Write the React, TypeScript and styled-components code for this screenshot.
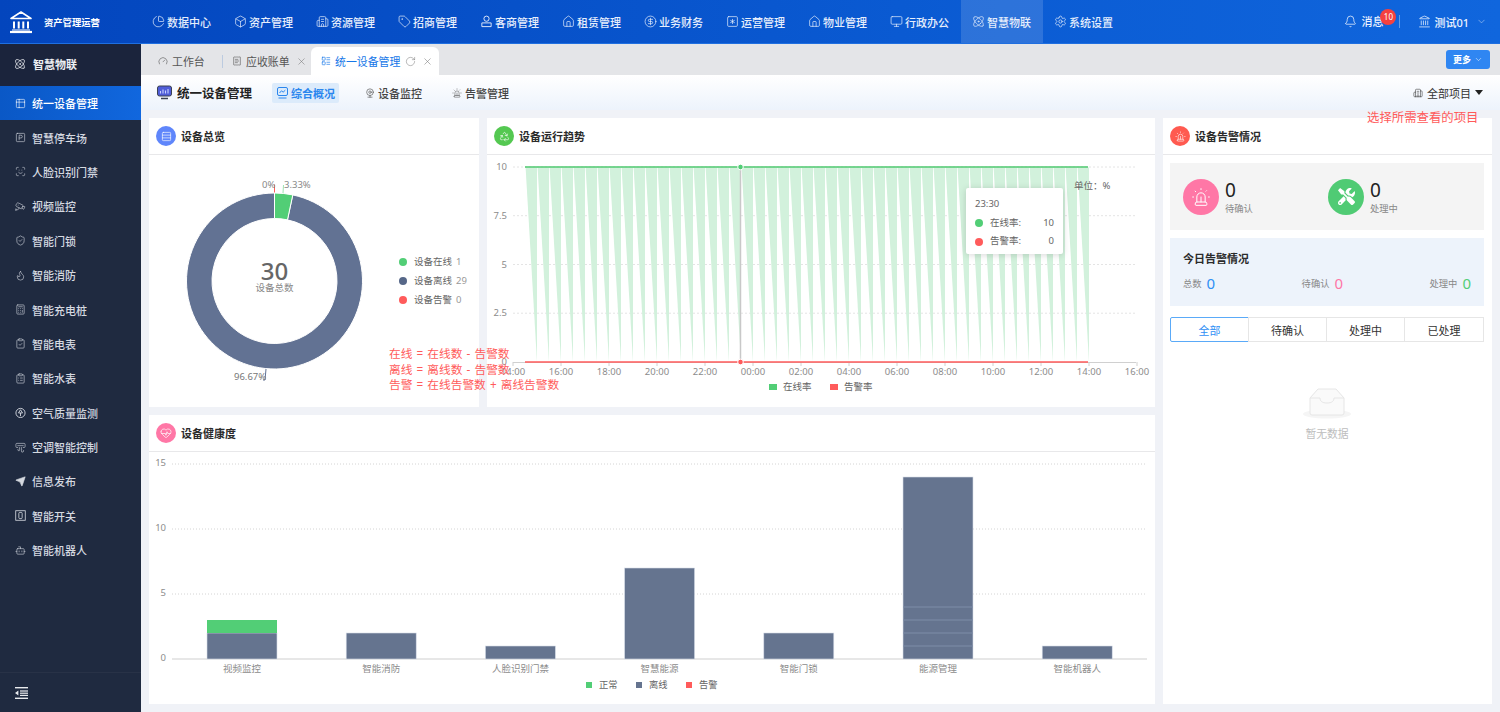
import React from 'react';
import styled, { createGlobalStyle } from 'styled-components';
import {
  AirVent, Atom, Bell, Bot, Box, Building2, Calculator, Cctv, ChartPie, ChevronDown,
  CircleDollarSign, ClipboardCheck, ClipboardList, Flame, Gauge, HeartPulse,
  House, Landmark, LayoutList, ReceiptText, Recycle, Monitor,
  RotateCw, Rows3, ScanFace, Send, Settings, ShieldCheck, Siren, SquareAsterisk, SquareParking, Table2, Tag,
  Webcam, X,
} from 'lucide-react';
import { FaTools } from 'react-icons/fa';

const GREEN = '#52ce76';
const NAVY = '#65748f';
const RED = '#ff5b5b';
const AXIS = '#8c8c8c';

const GlobalStyle = createGlobalStyle`
  html, body, #root {
    margin: 0;
    height: 100%;
  }
  body {
    font-family: "Noto Sans", "Noto Sans CJK SC", sans-serif;
    background: #f0f2f7;
    overflow: hidden;
  }
  svg text {
    font-family: "Noto Sans", "Noto Sans CJK SC", sans-serif;
  }
`;

const Page = styled.div`
  width: 1500px;
  height: 712px;
  display: grid;
  grid-template-rows: 44px 1fr;
  grid-template-columns: 141px 1fr;
  overflow: hidden;
  position: relative;
`;

/* ---------- top bar ---------- */
const TopBar = styled.header`
  grid-column: 1 / 3;
  display: flex;
  align-items: stretch;
  background: linear-gradient(90deg, #0345bd 0%, #0a5ad2 60%, #1066dd 100%);
  border-bottom: 1px solid #1f6fe0;
  color: #fff;
`;

const Brand = styled.div`
  width: 141px;
  display: flex;
  align-items: center;
  gap: 11px;
  padding-left: 9px;
  box-sizing: border-box;
  font-size: 9.3px;
  font-weight: 700;
`;

const Nav = styled.nav`
  display: flex;
  flex: 1;
`;

const NavItem = styled.div<{ $active?: boolean }>`
  width: 82px;
  display: flex;
  align-items: center;
  gap: 2px;
  padding-left: 11px;
  box-sizing: border-box;
  font-size: 11px;
  font-weight: 500;
  color: #e6eefc;
  background: ${p => (p.$active ? 'rgba(255,255,255,.14)' : 'transparent')};
  white-space: nowrap;
`;

const UserArea = styled.div`
  display: flex;
  align-items: center;
  font-size: 11px;
  font-weight: 500;
  color: #eef4ff;
  padding-right: 13px;
`;

const MsgBox = styled.div`
  position: relative;
  display: flex;
  align-items: center;
  gap: 4px;
  padding-right: 16px;
  border-right: 1px solid rgba(255,255,255,.35);
  line-height: 12px;
`;

const Badge = styled.span`
  position: absolute;
  left: 36px;
  top: -6px;
  width: 16px;
  height: 16px;
  border-radius: 50%;
  background: #f5413f;
  font-size: 8px;
  font-weight: 400;
  line-height: 16px;
  text-align: center;
  color: #fff;
`;

const UserName = styled.div`
  display: flex;
  align-items: center;
  gap: 3px;
  margin-left: 18px;
`;

const UserChevron = styled(ChevronDown)`
  margin-left: 4px;
  opacity: .8;
`;

/* ---------- side bar ---------- */
const Side = styled.aside`
  background: #1f2a40;
  display: flex;
  flex-direction: column;
  color: #d5d9e0;
`;

const SideHead = styled.div`
  height: 42px;
  display: flex;
  align-items: center;
  gap: 7px;
  padding: 0 0 2px 14px;
  box-sizing: border-box;
  background: #1b243c;
  color: #eef0f4;
  font-size: 11px;
  font-weight: 700;
`;

const SideItem = styled.div<{ $active?: boolean }>`
  height: 34.4px;
  flex: none;
  display: flex;
  align-items: center;
  gap: 6px;
  padding-left: 15px;
  font-size: 11px;
  font-weight: 500;
  color: ${p => (p.$active ? '#fff' : '#d5d9e0')};
  background: ${p => (p.$active ? 'linear-gradient(90deg, #0a58c6, #1167de)' : 'transparent')};
`;

const SideFoot = styled.div`
  margin-top: auto;
  height: 39px;
  display: flex;
  align-items: center;
  padding-left: 15px;
  border-top: 1px solid #283247;
`;

/* ---------- tabs ---------- */
const Main = styled.main`
  display: flex;
  flex-direction: column;
  min-width: 0;
`;

const TabBar = styled.div`
  height: 31px;
  flex: none;
  display: flex;
  align-items: flex-end;
  background: #e4e5e8;
  position: relative;
  padding-left: 17px;
  font-size: 10.9px;
  color: #555;
`;

const Tab = styled.div<{ $active?: boolean; $width: number }>`
  width: ${p => p.$width}px;
  height: 28px;
  box-sizing: border-box;
  display: flex;
  align-items: center;
  gap: 4px;
  flex: none;
  padding-left: ${p => (p.$active ? 10 : 0)}px;
  background: ${p => (p.$active ? '#fff' : 'transparent')};
  border-radius: ${p => (p.$active ? '6px 6px 0 0' : '0')};
  color: ${p => (p.$active ? '#1677e8' : '#555')};
`;

const TabClose = styled(X)`
  margin-left: 2px;
  color: #777;
`;

const TabReload = styled(RotateCw)`
  margin-left: 1px;
  color: #777;
`;

const TabDivider = styled.span`
  width: 1px;
  height: 13px;
  margin: 0 9px 7px 0;
  background: #bccbe0;
  flex: none;
`;

const MoreButton = styled.button`
  position: absolute;
  right: 10px;
  top: 6px;
  width: 44px;
  height: 19px;
  display: flex;
  align-items: center;
  justify-content: center;
  gap: 3px;
  padding: 0;
  border: 0;
  border-radius: 3px;
  background: #2f86f2;
  color: #fff;
  font: 700 9px "Noto Sans", "Noto Sans CJK SC", sans-serif;
`;

const SubBar = styled.div`
  height: 35px;
  flex: none;
  display: flex;
  align-items: center;
  padding: 0 17px 0 16px;
  background: linear-gradient(180deg, #fff 0%, #edf3fc 100%);
  font-size: 11px;
  color: #444;
`;

const PageTitle = styled.div`
  display: flex;
  align-items: center;
  gap: 5px;
  width: 115px;
  font-size: 12.5px;
  font-weight: 700;
  color: #222;
  white-space: nowrap;
`;

const SubTab = styled.div<{ $active?: boolean; $width: number }>`
  width: ${p => p.$width}px;
  height: 20px;
  display: flex;
  align-items: center;
  gap: 3px;
  box-sizing: border-box;
  padding-left: 5px;
  border-radius: 2px;
  font-weight: ${p => (p.$active ? 700 : 500)};
  color: ${p => (p.$active ? '#2a86ee' : '#444')};
  background: ${p => (p.$active ? '#dcebfb' : 'transparent')};
`;

const SubTabs = styled.div`
  display: flex;
  gap: 21px;
`;

const ProjectPicker = styled.div`
  margin-left: auto;
  display: flex;
  align-items: center;
  gap: 4px;
  color: #333;
`;

const Caret = styled.span`
  width: 0;
  height: 0;
  border-left: 4px solid transparent;
  border-right: 4px solid transparent;
  border-top: 5px solid #222;
`;

/* ---------- content ---------- */
const Content = styled.div`
  flex: 1;
  display: grid;
  grid-template-columns: 1006px 329px;
  column-gap: 8px;
  padding: 8px;
  min-height: 0;
  position: relative;
`;

const LeftCol = styled.div`
  display: grid;
  grid-template-columns: 330px 668px;
  grid-template-rows: 289px 289px;
  gap: 8px;
`;

const Card = styled.section<{ $wide?: boolean }>`
  background: #fff;
  display: flex;
  flex-direction: column;
  grid-column: ${p => (p.$wide ? '1 / 3' : 'auto')};
  min-height: 0;
`;

const CardHead = styled.div`
  height: 37px;
  flex: none;
  display: flex;
  align-items: center;
  gap: 5px;
  padding-left: 7px;
  box-sizing: border-box;
  border-bottom: 1px solid #e8e8ea;
  font-size: 11px;
  font-weight: 700;
  color: #2b2b2b;
`;

const Round = styled.span<{ $color: string; $size?: number }>`
  width: ${p => p.$size ?? 20}px;
  height: ${p => p.$size ?? 20}px;
  border-radius: 50%;
  background: ${p => p.$color};
  display: flex;
  align-items: center;
  justify-content: center;
  color: #fff;
  flex: none;
`;

const ChartBody = styled.div`
  flex: 1;
  display: flex;
  position: relative;
  min-height: 0;
`;

const ChartSvg = styled.svg`
  display: block;
  flex: none;
`;

const DonutLegend = styled.ul`
  list-style: none;
  margin: 0;
  padding: 0;
  align-self: center;
  display: flex;
  flex-direction: column;
  gap: 5px;
  font-size: 9.5px;
  line-height: 14px;
  color: #666;
`;

const LegendRow = styled.li`
  display: flex;
  align-items: center;
  gap: 7px;
`;

const Dot = styled.i<{ $color: string }>`
  width: 8px;
  height: 8px;
  border-radius: 50%;
  background: ${p => p.$color};
  flex: none;
`;

const LegendCount = styled.span`
  color: #999;
  margin-left: -3px;
`;

const Tooltip = styled.div`
  position: absolute;
  left: 479px;
  top: 33px;
  width: 97px;
  height: 66px;
  box-sizing: border-box;
  padding: 7px 9px;
  background: #fff;
  border-radius: 2px;
  box-shadow: 0 1px 7px rgba(0,0,0,.16);
  font-size: 9.5px;
  line-height: 18.7px;
  color: #666;
`;

const TipRow = styled.div`
  display: flex;
  align-items: center;
  gap: 7px;
`;

const TipValue = styled.span`
  margin-left: auto;
`;

const UnitLabel = styled.span`
  position: absolute;
  left: 587px;
  top: 24px;
  font-size: 9.5px;
  line-height: 14px;
  color: #666;
`;

const Note = styled.div`
  position: absolute;
  color: #ff5b5b;
  font-size: 11.7px;
  line-height: 15.6px;
  white-space: pre;
  pointer-events: none;
`;

const FormulaNote = styled(Note)`
  left: 248px;
  top: 236px;
  word-spacing: 1.1px;
`;

const ProjectNote = styled(Note)`
  left: 1226px;
  top: 0;
  font-size: 12.4px;
`;

/* ---------- alarm panel ---------- */
const AlarmBody = styled.div`
  padding: 8px 8px 8px 7px;
  display: flex;
  flex-direction: column;
  gap: 8px;
`;

const StatPanel = styled.div`
  height: 67px;
  background: #f4f4f4;
  display: grid;
  grid-template-columns: 145px 1fr;
  align-items: center;
  padding-left: 13px;
`;

const Stat = styled.div`
  display: flex;
  align-items: center;
  gap: 6px;
`;

const StatNumber = styled.div`
  font-size: 19px;
  line-height: 22px;
  color: #222;
`;

const StatLabel = styled.div`
  font-size: 9.3px;
  line-height: 12px;
  margin-top: 2px;
  color: #888;
`;

const TodayPanel = styled.div`
  height: 68px;
  box-sizing: border-box;
  background: #edf3fb;
  padding: 13px 13px 0;
`;

const TodayTitle = styled.div`
  font-size: 11px;
  line-height: 16px;
  font-weight: 700;
  color: #2b2b2b;
`;

const TodayRow = styled.div`
  display: flex;
  justify-content: space-between;
  align-items: center;
  margin-top: 7px;
  font-size: 9.3px;
  color: #888;
`;

const TodayCell = styled.div`
  display: flex;
  align-items: center;
  gap: 5px;
`;

const TodayNumber = styled.span<{ $color: string }>`
  font-size: 15px;
  line-height: 18px;
  color: ${p => p.$color};
`;

const Segments = styled.div`
  margin-top: 3px;
  height: 25px;
  display: grid;
  grid-template-columns: 79px 78px 78px 79px;
  border-radius: 2px;
`;

const Segment = styled.div<{ $active?: boolean }>`
  display: flex;
  align-items: center;
  justify-content: center;
  font-size: 11px;
  color: ${p => (p.$active ? '#2f8ff5' : '#333')};
  border: 1px solid ${p => (p.$active ? '#5aaaf8' : '#e6e6e6')};
  margin-left: ${p => (p.$active ? 0 : -1)}px;
  border-radius: ${p => (p.$active ? '2px 0 0 2px' : 0)};
`;

const Empty = styled.div`
  margin-top: 38px;
  display: flex;
  flex-direction: column;
  align-items: center;
  gap: 8px;
  font-size: 10.8px;
  line-height: 14px;
  color: #bdbdbd;
`;

type IconProps = { size?: number; strokeWidth?: number };

const PersonBase = ({ size = 13 }: IconProps) => (
  <svg width={size} height={size} viewBox="0 0 14 14" fill="none" stroke="currentColor" strokeWidth="1">
    <circle cx="7" cy="4" r="2.8" />
    <path d="M2 8.5h10v4H2z" />
  </svg>
);

const LeafCircle = ({ size = 11 }: IconProps) => (
  <svg width={size} height={size} viewBox="0 0 12 12" fill="none" stroke="currentColor" strokeWidth="1">
    <circle cx="6" cy="6.5" r="5" />
    <path d="M6 3 3.8 6.5h4.4zM6 6.5V10" />
  </svg>
);

const SwitchIcon = ({ size = 11 }: IconProps) => (
  <svg width={size} height={size} viewBox="0 0 12 12" fill="none" stroke="currentColor" strokeWidth="0.9">
    <rect x="0.8" y="0.8" width="10.4" height="10.4" />
    <rect x="4.2" y="2.6" width="3.6" height="6.8" rx="1" />
  </svg>
);

const CollapseIcon = () => (
  <svg width="13" height="12" viewBox="0 0 13 12" fill="#e8eaee">
    <rect x="0" y="0" width="13" height="1.4" />
    <rect x="5" y="3.4" width="8" height="1.2" />
    <rect x="5" y="5.6" width="8" height="1.2" />
    <rect x="5" y="7.8" width="8" height="1.2" />
    <rect x="0" y="10.6" width="13" height="1.4" />
    <path d="M3.4 3.4v5.2L0 6z" />
  </svg>
);

const ScreenIcon = () => (
  <svg width="15" height="15" viewBox="0 0 15 15">
    <rect x="0.5" y="1" width="14" height="10" rx="2" fill="#4f5dd8" stroke="#3a4152" strokeWidth="1" />
    <path d="M3.5 8.5V6M6 8.5V4.5M8.5 8.5V5.5M11 8.5V4" stroke="#c9d2ff" strokeWidth="1.1" />
    <path d="M4 13.5h7" stroke="#3a4152" strokeWidth="1.5" />
  </svg>
);

const ChartScreenIcon = () => (
  <svg width="11" height="12" viewBox="0 0 11 12" fill="none" stroke="#2a86ee" strokeWidth="1">
    <rect x="0.5" y="0.5" width="10" height="8" rx="1.5" />
    <path d="M2.5 6 4.5 3.8l1.6 1.4 2.2-2" />
    <path d="M1.5 11h8" />
  </svg>
);

const navItems = [
  ['数据中心', ChartPie], ['资产管理', Box], ['资源管理', Building2], ['招商管理', Tag],
  ['客商管理', PersonBase], ['租赁管理', House], ['业务财务', CircleDollarSign], ['运营管理', SquareAsterisk],
  ['物业管理', House], ['行政办公', Monitor], ['智慧物联', Atom], ['系统设置', Settings],
] as const;

const sideItems = [
  ['统一设备管理', Table2], ['智慧停车场', SquareParking], ['人脸识别门禁', ScanFace], ['视频监控', Cctv],
  ['智能门锁', ShieldCheck], ['智能消防', Flame], ['智能充电桩', Calculator], ['智能电表', ClipboardCheck],
  ['智能水表', ClipboardList], ['空气质量监测', LeafCircle], ['空调智能控制', AirVent], ['信息发布', Send],
  ['智能开关', SwitchIcon], ['智能机器人', Bot],
] as const;

const Logo = () => (
  <svg width="24" height="24" viewBox="0 0 24 24" fill="none" stroke="#fff" strokeWidth="1.6">
    <path d="M2 8.5 12 2l10 6.5z" strokeLinejoin="round" />
    <path d="M5 11.5v7M9.7 11.5v7M14.3 11.5v7M19 11.5v7" strokeWidth="2" />
    <path d="M1 22h22" strokeWidth="2.2" />
    <path d="M3 20h18" strokeWidth="1" />
  </svg>
);

const polar = (cx: number, cy: number, r: number, pct: number) => {
  const a = (pct / 100) * Math.PI * 2 - Math.PI / 2;
  return [cx + r * Math.cos(a), cy + r * Math.sin(a)];
};

const ringPath = (from: number, to: number) => {
  const [cx, cy, R, r] = [274.5, 281, 88, 62.5];
  const large = to - from > 50 ? 1 : 0;
  const [ax, ay] = polar(cx, cy, R, from);
  const [bx, by] = polar(cx, cy, R, to);
  const [dx, dy] = polar(cx, cy, r, to);
  const [ex, ey] = polar(cx, cy, r, from);
  return `M${ax} ${ay}A${R} ${R} 0 ${large} 1 ${bx} ${by}L${dx} ${dy}A${r} ${r} 0 ${large} 0 ${ex} ${ey}Z`;
};

const DonutChart = () => (
  <ChartSvg width="250" height="252" viewBox="149 155 250 252">
    <path d={ringPath(3.33, 100)} fill="#627293" stroke="#fff" strokeWidth="1" />
    <path d={ringPath(0, 3.33)} fill={GREEN} stroke="#fff" strokeWidth="1" />
    <path d="M274.5 184.5v8" stroke={RED} />
    <path d="M283.5 185l-.5 8" stroke="#9fe3b4" />
    <path d="M266 369l-1 11h-2" stroke="#627293" fill="none" />
    <text x="262" y="188" fontSize="9.5" fill="#888">0%</text>
    <text x="284" y="188" fontSize="9.5" fill="#888">3.33%</text>
    <text x="234" y="380" fontSize="9.5" fill="#777">96.67%</text>
    <text x="274.5" y="280" fontSize="24" fontWeight="500" fill="#666" textAnchor="middle">30</text>
    <text x="274.5" y="291" fontSize="9.5" fill="#888" textAnchor="middle">设备总数</text>
  </ChartSvg>
);

const trendX = (i: number) => 525 + i * 12;
const spikes = Array.from({ length: 47 }, (_, i) => i);
const timeLabels = ['14:00', '16:00', '18:00', '20:00', '22:00', '00:00', '02:00', '04:00', '06:00', '08:00', '10:00', '12:00', '14:00', '16:00'];
const trendGrid: [string, number][] = [['10', 167], ['7.5', 215.7], ['5', 264.5], ['2.5', 313.2], ['0', 362]];

const TrendChart = () => (
  <ChartSvg width="668" height="252" viewBox="487 155 668 252">
    {trendGrid.slice(0, 4).map(([label, y]) => (
      <path key={label} d={`M513 ${y}H1136`} stroke="#e4e4e4" strokeDasharray="2 2" />
    ))}
    {spikes.map(i => (
      <path
        key={i}
        d={`M${trendX(i) + 0.6} 167.5H${trendX(i + 1)}V362Z`}
        fill="#d2f1dc"
      />
    ))}
    <path d="M513 362.5H1136" stroke="#d0d0d0" />
    {timeLabels.map((t, i) => (
      <g key={i}>
        <path d={`M${513 + i * 48} 362v4`} stroke="#d0d0d0" />
        <text x={513 + i * 48} y="375" fontSize="9.5" fill={AXIS} textAnchor="middle">{t}</text>
      </g>
    ))}
    {trendGrid.map(([label, y]) => (
      <text key={label} x="507" y={y + 3} fontSize="9.5" fill={AXIS} textAnchor="end">{label}</text>
    ))}
    <path d="M740.5 167V362" stroke="#c8c8c8" strokeWidth="1.5" />
    <path d="M525 167H1088" stroke="#4cc86e" strokeWidth="1.6" />
    <path d="M525 362H1088" stroke={RED} strokeWidth="1.6" />
    <circle cx="740.5" cy="167" r="2.8" fill={GREEN} stroke="#fff" />
    <circle cx="740.5" cy="362" r="2.8" fill={RED} stroke="#fff" />
    <rect x="769" y="384" width="8" height="6" fill={GREEN} />
    <text x="783" y="390" fontSize="9.5" fill="#666">在线率</text>
    <rect x="830" y="384" width="8" height="6" fill={RED} />
    <text x="844" y="390" fontSize="9.5" fill="#666">告警率</text>
  </ChartSvg>
);

const barX = (i: number) => 242 + i * 139.2;
const barUnit = 13;
const barBase = 659;
const bars: { label: string; online: number; offline: number; cuts?: number[] }[] = [
  { label: '视频监控', online: 1, offline: 2 },
  { label: '智能消防', online: 0, offline: 2 },
  { label: '人脸识别门禁', online: 0, offline: 1 },
  { label: '智慧能源', online: 0, offline: 7 },
  { label: '智能门锁', online: 0, offline: 2 },
  { label: '能源管理', online: 0, offline: 14, cuts: [1, 2, 3, 4] },
  { label: '智能机器人', online: 0, offline: 1 },
];

const HealthChart = () => (
  <ChartSvg width="1006" height="252" viewBox="149 452 1006 252">
    {[15, 10, 5].map(v => (
      <path key={v} d={`M172 ${barBase - v * barUnit}H1147`} stroke="#d4d4d4" strokeDasharray="1 2" />
    ))}
    <path d={`M172 ${barBase}H1147`} stroke="#cfcfcf" strokeWidth="1.2" />
    {[15, 10, 5, 0].map(v => (
      <text key={v} x="166" y={barBase - v * barUnit + 2} fontSize="9.5" fill={AXIS} textAnchor="end">{v}</text>
    ))}
    {bars.map((b, i) => {
      const left = barX(i) - 35;
      const offH = b.offline * barUnit;
      return (
        <g key={b.label}>
          <rect x={left} y={barBase - offH} width="70" height={offH} fill="#65748f" stroke="#d6dce8" strokeWidth="0.6" />
          {b.online > 0 && (
            <rect x={left} y={barBase - offH - b.online * barUnit} width="70" height={b.online * barUnit} fill={GREEN} />
          )}
          {b.cuts?.map(c => (
            <path key={c} d={`M${left} ${barBase - c * barUnit}h70`} stroke="#7f8da8" />
          ))}
          <text x={barX(i)} y="672" fontSize="9.5" fill={AXIS} textAnchor="middle">{b.label}</text>
        </g>
      );
    })}
    <rect x="586" y="682" width="6" height="6" fill={GREEN} />
    <text x="599" y="688" fontSize="9.3" fill="#666">正常</text>
    <rect x="636" y="682" width="6" height="6" fill={NAVY} />
    <text x="649" y="688" fontSize="9.3" fill="#666">离线</text>
    <rect x="686" y="682" width="6" height="6" fill={RED} />
    <text x="699" y="688" fontSize="9.3" fill="#666">告警</text>
  </ChartSvg>
);

const EmptyBox = () => (
  <svg width="50" height="31" viewBox="0 0 50 31" fill="none" stroke="#e6e6e6">
    <ellipse cx="25" cy="26" rx="24" ry="4.5" fill="#f5f5f5" stroke="none" />
    <path d="M8 10 16 1h18l8 9v15a2 2 0 0 1-2 2H10a2 2 0 0 1-2-2z" fill="#fafafa" />
    <path d="M8 10h10c0 3 2 5 7 5s7-2 7-5h10" />
  </svg>
);

export default function App() {
  return (
    <Page>
      <GlobalStyle />
      <TopBar>
        <Brand><Logo />资产管理运营</Brand>
        <Nav>
          {navItems.map(([label, Icon]) => (
            <NavItem key={label} $active={label === '智慧物联'}>
              <Icon size={13} strokeWidth={1.3} />{label}
            </NavItem>
          ))}
        </Nav>
        <UserArea>
          <MsgBox><Bell size={13} strokeWidth={1.4} />消息<Badge>10</Badge></MsgBox>
          <UserName><Landmark size={13} strokeWidth={1.4} />测试01<UserChevron size={11} strokeWidth={1.2} /></UserName>
        </UserArea>
      </TopBar>

      <Side>
        <SideHead><Atom size={12} strokeWidth={1.5} />智慧物联</SideHead>
        {sideItems.map(([label, Icon], i) => (
          <SideItem key={label} $active={i === 0}>
            {label === '信息发布'
              ? <Send size={11} strokeWidth={1.4} fill="currentColor" />
              : <Icon size={11} strokeWidth={1.3} />}
            {label}
          </SideItem>
        ))}
        <SideFoot><CollapseIcon /></SideFoot>
      </Side>

      <Main>
        <TabBar>
          <Tab $width={64}><Gauge size={10} strokeWidth={1.4} />工作台</Tab>
          <TabDivider />
          <Tab $width={79}><ReceiptText size={10} strokeWidth={1.4} />应收账单<TabClose size={11} strokeWidth={1.2} /></Tab>
          <Tab $active $width={128}>
            <LayoutList size={10} strokeWidth={1.6} />统一设备管理
            <TabReload size={11} strokeWidth={1.1} />
            <TabClose size={11} strokeWidth={1.2} />
          </Tab>
          <MoreButton>更多<ChevronDown size={9} strokeWidth={1.4} /></MoreButton>
        </TabBar>
        <SubBar>
          <PageTitle><ScreenIcon />统一设备管理</PageTitle>
          <SubTabs>
            <SubTab $active $width={67}><ChartScreenIcon />综合概况</SubTab>
            <SubTab $width={66}><Webcam size={10} strokeWidth={1.4} />设备监控</SubTab>
            <SubTab $width={66}><Siren size={10} strokeWidth={1.2} />告警管理</SubTab>
          </SubTabs>
          <ProjectPicker><Building2 size={10} strokeWidth={1.3} />全部项目<Caret /></ProjectPicker>
        </SubBar>

        <Content>
          <LeftCol>
            <Card>
              <CardHead><Round $color="#5f86fb"><Rows3 size={11} strokeWidth={1.4} /></Round>设备总览</CardHead>
              <ChartBody>
                <DonutChart />
                <DonutLegend>
                  <LegendRow><Dot $color={GREEN} />设备在线 <LegendCount>1</LegendCount></LegendRow>
                  <LegendRow><Dot $color="#566788" />设备离线 <LegendCount>29</LegendCount></LegendRow>
                  <LegendRow><Dot $color={RED} />设备告警 <LegendCount>0</LegendCount></LegendRow>
                </DonutLegend>
              </ChartBody>
            </Card>
            <Card>
              <CardHead><Round $color="#54c851"><Recycle size={11} strokeWidth={1.4} /></Round>设备运行趋势</CardHead>
              <ChartBody>
                <TrendChart />
                <UnitLabel>单位：%</UnitLabel>
                <Tooltip>
                  23:30
                  <TipRow><Dot $color={GREEN} />在线率:<TipValue>10</TipValue></TipRow>
                  <TipRow><Dot $color={RED} />告警率:<TipValue>0</TipValue></TipRow>
                </Tooltip>
              </ChartBody>
            </Card>
            <Card $wide>
              <CardHead><Round $color="#ff77a6"><HeartPulse size={12} strokeWidth={1.4} /></Round>设备健康度</CardHead>
              <ChartBody><HealthChart /></ChartBody>
            </Card>
          </LeftCol>

          <Card>
            <CardHead><Round $color="#ff5a50"><Siren size={11} strokeWidth={1.3} /></Round>设备告警情况</CardHead>
            <AlarmBody>
              <StatPanel>
                <Stat>
                  <Round $color="#ff77a6" $size={36}><Siren size={20} strokeWidth={1.2} /></Round>
                  <div><StatNumber>0</StatNumber><StatLabel>待确认</StatLabel></div>
                </Stat>
                <Stat>
                  <Round $color="#50cb74" $size={36}><FaTools size={17} /></Round>
                  <div><StatNumber>0</StatNumber><StatLabel>处理中</StatLabel></div>
                </Stat>
              </StatPanel>
              <TodayPanel>
                <TodayTitle>今日告警情况</TodayTitle>
                <TodayRow>
                  <TodayCell>总数<TodayNumber $color="#2f8ff5">0</TodayNumber></TodayCell>
                  <TodayCell>待确认<TodayNumber $color="#ff77a6">0</TodayNumber></TodayCell>
                  <TodayCell>处理中<TodayNumber $color={GREEN}>0</TodayNumber></TodayCell>
                </TodayRow>
              </TodayPanel>
              <Segments>
                <Segment $active>全部</Segment>
                <Segment>待确认</Segment>
                <Segment>处理中</Segment>
                <Segment>已处理</Segment>
              </Segments>
              <Empty><EmptyBox />暂无数据</Empty>
            </AlarmBody>
          </Card>
          <FormulaNote>{'在线 = 在线数 - 告警数\n离线 = 离线数 - 告警数\n告警 = 在线告警数 + 离线告警数'}</FormulaNote>
          <ProjectNote>选择所需查看的项目</ProjectNote>
        </Content>
      </Main>
    </Page>
  );
}
